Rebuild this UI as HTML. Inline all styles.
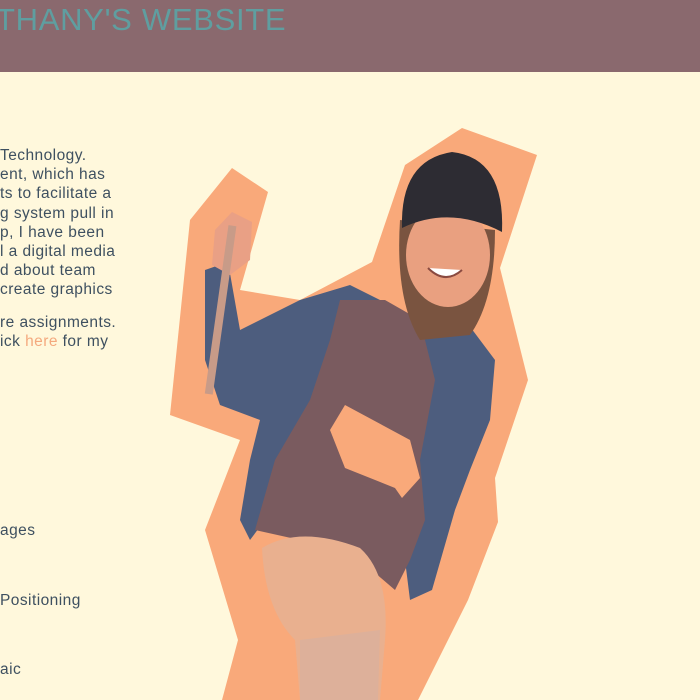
<!DOCTYPE html>
<html><head><meta charset="utf-8"><style>
html,body{margin:0;padding:0;width:700px;height:700px;overflow:hidden;background:#fff8dc;font-family:"Liberation Sans",sans-serif;position:relative;}
.hdr{position:absolute;left:0;top:0;width:700px;height:72px;background:#8a696e;overflow:hidden;}
.title{position:absolute;left:-4px;top:2px;font-size:31px;color:#5f9ea0;white-space:nowrap;letter-spacing:0.7px;}
a{color:#f4a97e;text-decoration:none;}
svg{position:absolute;left:0;top:0;}
.t{color:#3e5060;font-size:15.5px;letter-spacing:0.45px;white-space:nowrap;}
</style></head><body>
<div class="hdr"><div class="title">THANY'S WEBSITE</div></div>
<div class="t" style="position:absolute;left:0;top:146px;line-height:19.2px;width:130px;overflow:hidden;">
<div>Technology.</div>
<div>ent, which has</div>
<div>ts to facilitate a</div>
<div>g system pull in</div>
<div>p, I have been</div>
<div>l a digital media</div>
<div>d about team</div>
<div>create graphics</div>
<div style="margin-top:13px">re assignments.</div>
<div>ick <a>here</a> for my</div>
</div>
<div class="t" style="position:absolute;left:0;top:522px;">ages</div>
<div class="t" style="position:absolute;left:0;top:592px;">Positioning</div>
<div class="t" style="position:absolute;left:0;top:661px;">aic</div>
<svg width="700" height="700" viewBox="0 0 700 700">
<polygon fill="#f9a97a" points="462,128 537,155 500,268 528,380 495,478 498,522 468,600 418,700 222,700 238,640 205,530 240,440 170,415 190,220 232,168 268,192 240,290 300,300 372,262 405,165"/>
<polygon fill="#4d5d7e" points="205,270 228,262 240,330 300,300 350,285 380,300 420,320 465,320 495,360 490,420 470,470 455,510 432,590 410,600 405,560 420,490 410,400 330,400 300,480 265,520 250,540 240,520 250,460 260,420 220,405 205,360"/>
<polygon fill="#7a5b5f" points="340,300 385,300 420,320 435,380 420,460 425,520 410,560 395,590 360,560 300,540 255,530 275,460 310,400 330,340"/>
<polygon fill="#f9a97a" points="330,430 345,405 410,440 420,478 402,498 395,488 345,468"/>
<polygon fill="#e9a085" points="215,230 232,212 252,222 250,260 230,275 212,265"/>
<rect x="218" y="225" width="8" height="170" fill="#c89b88" transform="rotate(8 222 300)"/>
<path d="M400,220 Q395,300 420,340 L470,335 Q495,300 495,230 Z" fill="#7a5440"/>
<ellipse cx="448" cy="255" rx="42" ry="52" fill="#e9a080"/>
<path d="M428,268 Q445,285 462,270" fill="#fff" stroke="#8a4a40" stroke-width="2"/>
<path d="M402,228 Q400,160 452,152 Q505,158 502,232 Q450,205 402,228 Z" fill="#2d2c33"/>
<path d="M262,548 Q300,525 360,548 Q390,575 385,640 L380,700 L300,700 L295,640 Q265,610 262,548 Z" fill="#e9b08f"/>
<path d="M300,640 L380,630 L378,700 L300,700 Z" fill="#ddb09a"/>
</svg>
</body></html>
